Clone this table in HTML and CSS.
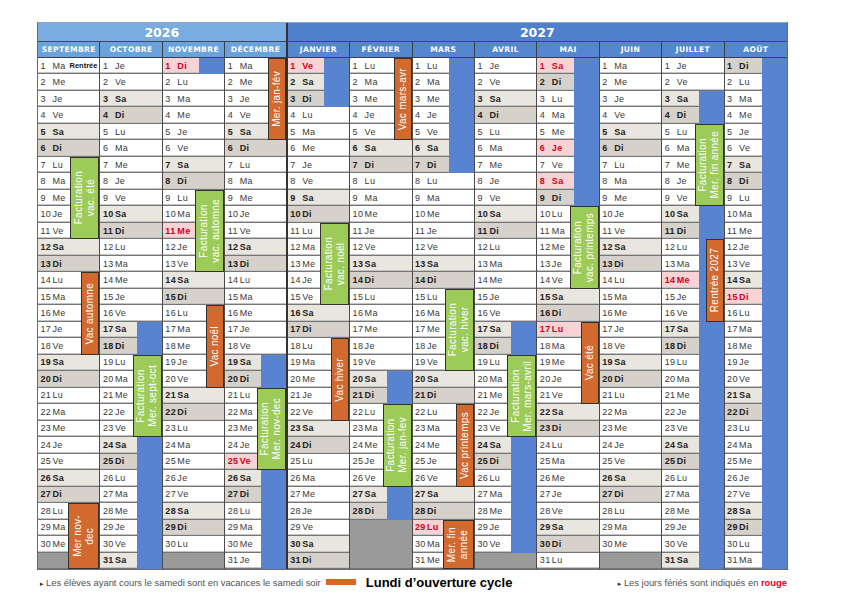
FILE: index.html
```html
<!DOCTYPE html>
<html lang="fr">
<head>
<meta charset="utf-8">
<title>Calendrier scolaire 2026-2027</title>
<link rel="stylesheet" href="styles.css">
</head>
<body>
<div class="cal">
  <div class="yr y26">2026</div>
  <div class="yr y27">2027</div>

  <div class="mh a">SEPTEMBRE</div>
  <div class="mh a">OCTOBRE</div>
  <div class="mh a">NOVEMBRE</div>
  <div class="mh a sep">DÉCEMBRE</div>
  <div class="mh b">JANVIER</div>
  <div class="mh b">FÉVRIER</div>
  <div class="mh b">MARS</div>
  <div class="mh b">AVRIL</div>
  <div class="mh b">MAI</div>
  <div class="mh b">JUIN</div>
  <div class="mh b">JUILLET</div>
  <div class="mh b last">AOÛT</div>

  <!-- SEPTEMBRE -->
  <div class="m">
    <div class="days">
      <div class="c"><i>1</i>Ma<em>Rentrée</em></div><div class="c"><i>2</i>Me</div><div class="c"><i>3</i>Je</div><div class="c"><i>4</i>Ve</div><div class="c s"><i>5</i>Sa</div><div class="c d"><i>6</i>Di</div><div class="c"><i>7</i>Lu</div><div class="c"><i>8</i>Ma</div><div class="c"><i>9</i>Me</div><div class="c"><i>10</i>Je</div><div class="c"><i>11</i>Ve</div><div class="c s"><i>12</i>Sa</div><div class="c d"><i>13</i>Di</div><div class="c"><i>14</i>Lu</div><div class="c"><i>15</i>Ma</div><div class="c"><i>16</i>Me</div><div class="c"><i>17</i>Je</div><div class="c"><i>18</i>Ve</div><div class="c s"><i>19</i>Sa</div><div class="c d"><i>20</i>Di</div><div class="c"><i>21</i>Lu</div><div class="c"><i>22</i>Ma</div><div class="c"><i>23</i>Me</div><div class="c"><i>24</i>Je</div><div class="c"><i>25</i>Ve</div><div class="c s"><i>26</i>Sa</div><div class="c d"><i>27</i>Di</div><div class="c"><i>28</i>Lu</div><div class="c"><i>29</i>Ma</div><div class="c"><i>30</i>Me</div><div class="c x"></div>
    </div>
    <div class="ov">
      <div class="gr" style="grid-row:7/12"><span>Facturation<br>vac. été</span></div>
      <div class="or" style="grid-row:14/19"><span>Vac automne</span></div>
      <div class="or w2" style="grid-row:28/32"><span>Mer nov-<br>dec</span></div>
    </div>
  </div>

  <!-- OCTOBRE -->
  <div class="m">
    <div class="days">
      <div class="c"><i>1</i>Je</div><div class="c"><i>2</i>Ve</div><div class="c s"><i>3</i>Sa</div><div class="c d"><i>4</i>Di</div><div class="c"><i>5</i>Lu</div><div class="c"><i>6</i>Ma</div><div class="c"><i>7</i>Me</div><div class="c"><i>8</i>Je</div><div class="c"><i>9</i>Ve</div><div class="c s"><i>10</i>Sa</div><div class="c d"><i>11</i>Di</div><div class="c"><i>12</i>Lu</div><div class="c"><i>13</i>Ma</div><div class="c"><i>14</i>Me</div><div class="c"><i>15</i>Je</div><div class="c"><i>16</i>Ve</div><div class="c s"><i>17</i>Sa</div><div class="c d"><i>18</i>Di</div><div class="c"><i>19</i>Lu</div><div class="c"><i>20</i>Ma</div><div class="c"><i>21</i>Me</div><div class="c"><i>22</i>Je</div><div class="c"><i>23</i>Ve</div><div class="c s"><i>24</i>Sa</div><div class="c d"><i>25</i>Di</div><div class="c"><i>26</i>Lu</div><div class="c"><i>27</i>Ma</div><div class="c"><i>28</i>Me</div><div class="c"><i>29</i>Je</div><div class="c"><i>30</i>Ve</div><div class="c s"><i>31</i>Sa</div>
    </div>
    <div class="ov">
      <div class="bl" style="grid-row:17/32"></div>
      <div class="gr" style="grid-row:19/24"><span>Facturation<br>Mer. sept-oct</span></div>
    </div>
  </div>

  <!-- NOVEMBRE -->
  <div class="m">
    <div class="days">
      <div class="c f"><i>1</i>Di</div><div class="c"><i>2</i>Lu</div><div class="c"><i>3</i>Ma</div><div class="c"><i>4</i>Me</div><div class="c"><i>5</i>Je</div><div class="c"><i>6</i>Ve</div><div class="c s"><i>7</i>Sa</div><div class="c d"><i>8</i>Di</div><div class="c"><i>9</i>Lu</div><div class="c"><i>10</i>Ma</div><div class="c f"><i>11</i>Me</div><div class="c"><i>12</i>Je</div><div class="c"><i>13</i>Ve</div><div class="c s"><i>14</i>Sa</div><div class="c d"><i>15</i>Di</div><div class="c"><i>16</i>Lu</div><div class="c"><i>17</i>Ma</div><div class="c"><i>18</i>Me</div><div class="c"><i>19</i>Je</div><div class="c"><i>20</i>Ve</div><div class="c s"><i>21</i>Sa</div><div class="c d"><i>22</i>Di</div><div class="c"><i>23</i>Lu</div><div class="c"><i>24</i>Ma</div><div class="c"><i>25</i>Me</div><div class="c"><i>26</i>Je</div><div class="c"><i>27</i>Ve</div><div class="c s"><i>28</i>Sa</div><div class="c d"><i>29</i>Di</div><div class="c"><i>30</i>Lu</div><div class="c x"></div>
    </div>
    <div class="ov">
      <div class="bl" style="grid-row:1/2"></div>
      <div class="gr" style="grid-row:9/14"><span>Facturation<br>vac. automne</span></div>
      <div class="or" style="grid-row:16/21"><span>Vac noël</span></div>
    </div>
  </div>

  <!-- DÉCEMBRE -->
  <div class="m sep">
    <div class="days">
      <div class="c"><i>1</i>Ma</div><div class="c"><i>2</i>Me</div><div class="c"><i>3</i>Je</div><div class="c"><i>4</i>Ve</div><div class="c s"><i>5</i>Sa</div><div class="c d"><i>6</i>Di</div><div class="c"><i>7</i>Lu</div><div class="c"><i>8</i>Ma</div><div class="c"><i>9</i>Me</div><div class="c"><i>10</i>Je</div><div class="c"><i>11</i>Ve</div><div class="c s"><i>12</i>Sa</div><div class="c d"><i>13</i>Di</div><div class="c"><i>14</i>Lu</div><div class="c"><i>15</i>Ma</div><div class="c"><i>16</i>Me</div><div class="c"><i>17</i>Je</div><div class="c"><i>18</i>Ve</div><div class="c s"><i>19</i>Sa</div><div class="c d"><i>20</i>Di</div><div class="c"><i>21</i>Lu</div><div class="c"><i>22</i>Ma</div><div class="c"><i>23</i>Me</div><div class="c"><i>24</i>Je</div><div class="c f"><i>25</i>Ve</div><div class="c s"><i>26</i>Sa</div><div class="c d"><i>27</i>Di</div><div class="c"><i>28</i>Lu</div><div class="c"><i>29</i>Ma</div><div class="c"><i>30</i>Me</div><div class="c"><i>31</i>Je</div>
    </div>
    <div class="ov">
      <div class="or" style="grid-row:1/6"><span>Mer. jan-fév</span></div>
      <div class="bl" style="grid-row:19/32"></div>
      <div class="gr" style="grid-row:21/26"><span>Facturation<br>Mer. nov-dec</span></div>
    </div>
  </div>

  <!-- JANVIER -->
  <div class="m">
    <div class="days">
      <div class="c f"><i>1</i>Ve</div><div class="c s"><i>2</i>Sa</div><div class="c d"><i>3</i>Di</div><div class="c"><i>4</i>Lu</div><div class="c"><i>5</i>Ma</div><div class="c"><i>6</i>Me</div><div class="c"><i>7</i>Je</div><div class="c"><i>8</i>Ve</div><div class="c s"><i>9</i>Sa</div><div class="c d"><i>10</i>Di</div><div class="c"><i>11</i>Lu</div><div class="c"><i>12</i>Ma</div><div class="c"><i>13</i>Me</div><div class="c"><i>14</i>Je</div><div class="c"><i>15</i>Ve</div><div class="c s"><i>16</i>Sa</div><div class="c d"><i>17</i>Di</div><div class="c"><i>18</i>Lu</div><div class="c"><i>19</i>Ma</div><div class="c"><i>20</i>Me</div><div class="c"><i>21</i>Je</div><div class="c"><i>22</i>Ve</div><div class="c s"><i>23</i>Sa</div><div class="c d"><i>24</i>Di</div><div class="c"><i>25</i>Lu</div><div class="c"><i>26</i>Ma</div><div class="c"><i>27</i>Me</div><div class="c"><i>28</i>Je</div><div class="c"><i>29</i>Ve</div><div class="c s"><i>30</i>Sa</div><div class="c d"><i>31</i>Di</div>
    </div>
    <div class="ov">
      <div class="bl" style="grid-row:1/4"></div>
      <div class="gr" style="grid-row:11/16"><span>Facturation<br>vac. noël</span></div>
      <div class="or" style="grid-row:18/23"><span>Vac hiver</span></div>
    </div>
  </div>

  <!-- FÉVRIER -->
  <div class="m">
    <div class="days">
      <div class="c"><i>1</i>Lu</div><div class="c"><i>2</i>Ma</div><div class="c"><i>3</i>Me</div><div class="c"><i>4</i>Je</div><div class="c"><i>5</i>Ve</div><div class="c s"><i>6</i>Sa</div><div class="c d"><i>7</i>Di</div><div class="c"><i>8</i>Lu</div><div class="c"><i>9</i>Ma</div><div class="c"><i>10</i>Me</div><div class="c"><i>11</i>Je</div><div class="c"><i>12</i>Ve</div><div class="c s"><i>13</i>Sa</div><div class="c d"><i>14</i>Di</div><div class="c"><i>15</i>Lu</div><div class="c"><i>16</i>Ma</div><div class="c"><i>17</i>Me</div><div class="c"><i>18</i>Je</div><div class="c"><i>19</i>Ve</div><div class="c s"><i>20</i>Sa</div><div class="c d"><i>21</i>Di</div><div class="c"><i>22</i>Lu</div><div class="c"><i>23</i>Ma</div><div class="c"><i>24</i>Me</div><div class="c"><i>25</i>Je</div><div class="c"><i>26</i>Ve</div><div class="c s"><i>27</i>Sa</div><div class="c d"><i>28</i>Di</div><div class="c x x3"></div>
    </div>
    <div class="ov">
      <div class="or" style="grid-row:1/6"><span>Vac mars-avr</span></div>
      <div class="bl" style="grid-row:20/29"></div>
      <div class="gr" style="grid-row:22/27"><span>Facturation<br>Mer. jan-fev</span></div>
    </div>
  </div>

  <!-- MARS -->
  <div class="m">
    <div class="days">
      <div class="c"><i>1</i>Lu</div><div class="c"><i>2</i>Ma</div><div class="c"><i>3</i>Me</div><div class="c"><i>4</i>Je</div><div class="c"><i>5</i>Ve</div><div class="c s"><i>6</i>Sa</div><div class="c d"><i>7</i>Di</div><div class="c"><i>8</i>Lu</div><div class="c"><i>9</i>Ma</div><div class="c"><i>10</i>Me</div><div class="c"><i>11</i>Je</div><div class="c"><i>12</i>Ve</div><div class="c s"><i>13</i>Sa</div><div class="c d"><i>14</i>Di</div><div class="c"><i>15</i>Lu</div><div class="c"><i>16</i>Ma</div><div class="c"><i>17</i>Me</div><div class="c"><i>18</i>Je</div><div class="c"><i>19</i>Ve</div><div class="c s"><i>20</i>Sa</div><div class="c d"><i>21</i>Di</div><div class="c"><i>22</i>Lu</div><div class="c"><i>23</i>Ma</div><div class="c"><i>24</i>Me</div><div class="c"><i>25</i>Je</div><div class="c"><i>26</i>Ve</div><div class="c s"><i>27</i>Sa</div><div class="c d"><i>28</i>Di</div><div class="c f"><i>29</i>Lu</div><div class="c"><i>30</i>Ma</div><div class="c"><i>31</i>Me</div>
    </div>
    <div class="ov">
      <div class="bl" style="grid-row:1/8"></div>
      <div class="gr" style="grid-row:15/20"><span>Facturation<br>vac. hiver</span></div>
      <div class="or" style="grid-row:22/27"><span>Vac printemps</span></div>
      <div class="or w2" style="grid-row:29/32"><span>Mer. fin<br>année</span></div>
    </div>
  </div>

  <!-- AVRIL -->
  <div class="m">
    <div class="days">
      <div class="c"><i>1</i>Je</div><div class="c"><i>2</i>Ve</div><div class="c s"><i>3</i>Sa</div><div class="c d"><i>4</i>Di</div><div class="c"><i>5</i>Lu</div><div class="c"><i>6</i>Ma</div><div class="c"><i>7</i>Me</div><div class="c"><i>8</i>Je</div><div class="c"><i>9</i>Ve</div><div class="c s"><i>10</i>Sa</div><div class="c d"><i>11</i>Di</div><div class="c"><i>12</i>Lu</div><div class="c"><i>13</i>Ma</div><div class="c"><i>14</i>Me</div><div class="c"><i>15</i>Je</div><div class="c"><i>16</i>Ve</div><div class="c s"><i>17</i>Sa</div><div class="c d"><i>18</i>Di</div><div class="c"><i>19</i>Lu</div><div class="c"><i>20</i>Ma</div><div class="c"><i>21</i>Me</div><div class="c"><i>22</i>Je</div><div class="c"><i>23</i>Ve</div><div class="c s"><i>24</i>Sa</div><div class="c d"><i>25</i>Di</div><div class="c"><i>26</i>Lu</div><div class="c"><i>27</i>Ma</div><div class="c"><i>28</i>Me</div><div class="c"><i>29</i>Je</div><div class="c"><i>30</i>Ve</div><div class="c x"></div>
    </div>
    <div class="ov">
      <div class="bl" style="grid-row:17/31"></div>
      <div class="gr" style="grid-row:19/24"><span>Facturation<br>Mer. mars-avril</span></div>
    </div>
  </div>

  <!-- MAI -->
  <div class="m">
    <div class="days">
      <div class="c f"><i>1</i>Sa</div><div class="c d"><i>2</i>Di</div><div class="c"><i>3</i>Lu</div><div class="c"><i>4</i>Ma</div><div class="c"><i>5</i>Me</div><div class="c f"><i>6</i>Je</div><div class="c"><i>7</i>Ve</div><div class="c f"><i>8</i>Sa</div><div class="c d"><i>9</i>Di</div><div class="c"><i>10</i>Lu</div><div class="c"><i>11</i>Ma</div><div class="c"><i>12</i>Me</div><div class="c"><i>13</i>Je</div><div class="c"><i>14</i>Ve</div><div class="c s"><i>15</i>Sa</div><div class="c d"><i>16</i>Di</div><div class="c f"><i>17</i>Lu</div><div class="c"><i>18</i>Ma</div><div class="c"><i>19</i>Me</div><div class="c"><i>20</i>Je</div><div class="c"><i>21</i>Ve</div><div class="c s"><i>22</i>Sa</div><div class="c d"><i>23</i>Di</div><div class="c"><i>24</i>Lu</div><div class="c"><i>25</i>Ma</div><div class="c"><i>26</i>Me</div><div class="c"><i>27</i>Je</div><div class="c"><i>28</i>Ve</div><div class="c s"><i>29</i>Sa</div><div class="c d"><i>30</i>Di</div><div class="c"><i>31</i>Lu</div>
    </div>
    <div class="ov">
      <div class="bl" style="grid-row:1/10"></div>
      <div class="gr" style="grid-row:10/15"><span>Facturation<br>vac. printemps</span></div>
      <div class="or" style="grid-row:17/22"><span>Vac été</span></div>
    </div>
  </div>

  <!-- JUIN -->
  <div class="m">
    <div class="days">
      <div class="c"><i>1</i>Ma</div><div class="c"><i>2</i>Me</div><div class="c"><i>3</i>Je</div><div class="c"><i>4</i>Ve</div><div class="c s"><i>5</i>Sa</div><div class="c d"><i>6</i>Di</div><div class="c"><i>7</i>Lu</div><div class="c"><i>8</i>Ma</div><div class="c"><i>9</i>Me</div><div class="c"><i>10</i>Je</div><div class="c"><i>11</i>Ve</div><div class="c s"><i>12</i>Sa</div><div class="c d"><i>13</i>Di</div><div class="c"><i>14</i>Lu</div><div class="c"><i>15</i>Ma</div><div class="c"><i>16</i>Me</div><div class="c"><i>17</i>Je</div><div class="c"><i>18</i>Ve</div><div class="c s"><i>19</i>Sa</div><div class="c d"><i>20</i>Di</div><div class="c"><i>21</i>Lu</div><div class="c"><i>22</i>Ma</div><div class="c"><i>23</i>Me</div><div class="c"><i>24</i>Je</div><div class="c"><i>25</i>Ve</div><div class="c s"><i>26</i>Sa</div><div class="c d"><i>27</i>Di</div><div class="c"><i>28</i>Lu</div><div class="c"><i>29</i>Ma</div><div class="c"><i>30</i>Me</div><div class="c x"></div>
    </div>
    <div class="ov"></div>
  </div>

  <!-- JUILLET -->
  <div class="m">
    <div class="days">
      <div class="c"><i>1</i>Je</div><div class="c"><i>2</i>Ve</div><div class="c s"><i>3</i>Sa</div><div class="c d"><i>4</i>Di</div><div class="c"><i>5</i>Lu</div><div class="c"><i>6</i>Ma</div><div class="c"><i>7</i>Me</div><div class="c"><i>8</i>Je</div><div class="c"><i>9</i>Ve</div><div class="c s"><i>10</i>Sa</div><div class="c d"><i>11</i>Di</div><div class="c"><i>12</i>Lu</div><div class="c"><i>13</i>Ma</div><div class="c f"><i>14</i>Me</div><div class="c"><i>15</i>Je</div><div class="c"><i>16</i>Ve</div><div class="c s"><i>17</i>Sa</div><div class="c d"><i>18</i>Di</div><div class="c"><i>19</i>Lu</div><div class="c"><i>20</i>Ma</div><div class="c"><i>21</i>Me</div><div class="c"><i>22</i>Je</div><div class="c"><i>23</i>Ve</div><div class="c s"><i>24</i>Sa</div><div class="c d"><i>25</i>Di</div><div class="c"><i>26</i>Lu</div><div class="c"><i>27</i>Ma</div><div class="c"><i>28</i>Me</div><div class="c"><i>29</i>Je</div><div class="c"><i>30</i>Ve</div><div class="c s"><i>31</i>Sa</div>
    </div>
    <div class="ov">
      <div class="bl" style="grid-row:3/32"></div>
      <div class="gr" style="grid-row:5/10"><span>Facturation<br>Mer. fin année</span></div>
      <div class="or" style="grid-row:12/17"><span>Rentrée 2027</span></div>
    </div>
  </div>

  <!-- AOÛT -->
  <div class="m last">
    <div class="days">
      <div class="c d"><i>1</i>Di</div><div class="c"><i>2</i>Lu</div><div class="c"><i>3</i>Ma</div><div class="c"><i>4</i>Me</div><div class="c"><i>5</i>Je</div><div class="c"><i>6</i>Ve</div><div class="c s"><i>7</i>Sa</div><div class="c d"><i>8</i>Di</div><div class="c"><i>9</i>Lu</div><div class="c"><i>10</i>Ma</div><div class="c"><i>11</i>Me</div><div class="c"><i>12</i>Je</div><div class="c"><i>13</i>Ve</div><div class="c s"><i>14</i>Sa</div><div class="c f"><i>15</i>Di</div><div class="c"><i>16</i>Lu</div><div class="c"><i>17</i>Ma</div><div class="c"><i>18</i>Me</div><div class="c"><i>19</i>Je</div><div class="c"><i>20</i>Ve</div><div class="c s"><i>21</i>Sa</div><div class="c d"><i>22</i>Di</div><div class="c"><i>23</i>Lu</div><div class="c"><i>24</i>Ma</div><div class="c"><i>25</i>Me</div><div class="c"><i>26</i>Je</div><div class="c"><i>27</i>Ve</div><div class="c s"><i>28</i>Sa</div><div class="c d"><i>29</i>Di</div><div class="c"><i>30</i>Lu</div><div class="c"><i>31</i>Ma</div>
    </div>
    <div class="ov">
      <div class="bl" style="grid-row:1/32"></div>
    </div>
  </div>
</div>

<div class="foot">
  <p class="note"><span class="tri">▸</span> Les élèves ayant cours le samedi sont en vacances le samedi soir</p>
  <span class="key"></span>
  <span class="keyl">Lundi d’ouverture cycle</span>
  <p class="note r"><span class="tri">▸</span> Les jours fériés sont indiqués en <b>rouge</b></p>
</div>
</body>
</html>
```

FILE: styles.css
```css
* { box-sizing: border-box; margin: 0; padding: 0; }

body {
  background: #fff;
  font-family: "Liberation Sans", Arial, sans-serif;
}

.cal {
  margin: 22px 0 0 37px;
  width: 751px;
  display: grid;
  grid-template-columns: repeat(12, minmax(0, 1fr));
  grid-template-rows: 19px 16px 511px;
  border: 1px solid #6a6a6a;
  border-top-color: #8aa6c8;
}

.yr {
  display: flex;
  align-items: center;
  justify-content: center;
  color: #fff;
  font: bold 12.5px "DejaVu Sans", sans-serif;
  border-bottom: 1px solid #3e4a5a;
}
.y26 { grid-column: span 4; background: #7aace2; border-right: 2px solid #333; }
.y27 { grid-column: span 8; background: #4f80cc; }

.mh {
  display: flex;
  align-items: center;
  justify-content: center;
  color: #fff;
  font: bold 7.6px "DejaVu Sans", sans-serif;
  letter-spacing: 0.35px;
  border-right: 1px solid #3a3f48;
  border-bottom: 1px solid #3a3f48;
  white-space: nowrap;
}
.mh.a { background: #6aa2dc; }
.mh.b { background: #5587d1; }
.mh.sep { border-right: 2px solid #333; }
.mh.last { border-right: none; }

.m {
  display: grid;
  grid-template: minmax(0, 1fr) / minmax(0, 1fr);
  border-right: 1px solid #4b4b4b;
}
.m.sep { border-right: 2px solid #333; }
.m.last { border-right: none; }

.days, .ov {
  grid-area: 1 / 1;
  display: grid;
  grid-template-rows: repeat(31, minmax(0, 1fr));
  grid-template-columns: minmax(0, 1fr);
}

.c {
  display: flex;
  align-items: center;
  padding: 0 2px 0 2px;
  font-size: 9px;
  letter-spacing: 0.35px;
  color: #3a3a3a;
  background: #fff;
  border-bottom: 1px solid #767676;
  box-shadow: inset 0 -1px 0 #c4c4c4;
  white-space: nowrap;
  overflow: hidden;
}
.c i {
  font-style: normal;
  display: inline-block;
  width: 12.5px;
  padding-left: 0.5px;
}
.c em {
  font-style: normal;
  font-weight: bold;
  font-size: 7.5px;
  letter-spacing: 0;
  color: #111;
  margin-left: auto;
}
.c.s { background: #e9e5df; font-weight: bold; color: #222; }
.c.d { background: #d6d1ca; font-weight: bold; color: #222; }
.c.f { background: #f7d3d6; font-weight: bold; color: #d6001c; }
.c.x { background: #9a9a9a; box-shadow: none; }
.c.x3 { grid-row: span 3; }

.bl, .or, .gr {
  grid-column: 1;
  justify-self: end;
}
.bl {
  width: 25px;
  background: #5883d0;
}
.or, .gr {
  display: flex;
  align-items: center;
  justify-content: center;
  color: #fff;
  border: 1px solid #34302c;
  overflow: hidden;
}
.or { width: 18px; background: #d2692f; }
.or.w2 { width: 31px; }
.gr { width: 29px; background: #9ccb5a; }

.or span, .gr span {
  writing-mode: vertical-rl;
  transform: rotate(180deg);
  font-size: 10px;
  line-height: 12px;
  letter-spacing: 0.3px;
  text-align: center;
  white-space: nowrap;
}

.foot {
  display: flex;
  align-items: center;
  width: 751px;
  height: 16px;
  margin: 4px 0 0 37px;
}
.note {
  font-size: 9.4px;
  color: #505050;
  padding-left: 3px;
  white-space: nowrap;
}
.note.r { margin-left: auto; padding-right: 1px; }
.note b { color: #e3001b; }
.tri {
  font-family: "DejaVu Sans", sans-serif;
  font-size: 7px;
  color: #333;
}
.key {
  width: 30px;
  height: 6px;
  background: #e0661f;
  margin-left: 5px;
}
.keyl {
  font: bold 13px "Liberation Sans", Arial, sans-serif;
  color: #000;
  margin-left: 10px;
  white-space: nowrap;
}
```
